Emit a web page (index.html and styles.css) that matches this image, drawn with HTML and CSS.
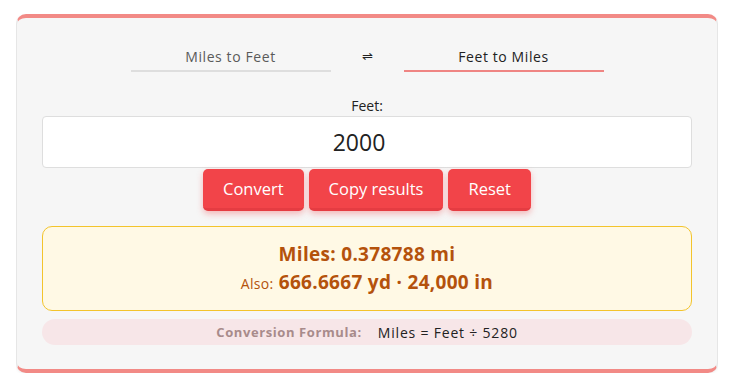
FILE: index.html
```html
<!DOCTYPE html>
<html lang="en">
<head>
    <meta charset="UTF-8">
    <meta name="viewport" content="width=device-width, initial-scale=1.0">
    <title>Feet to Miles Converter</title>
    <link rel="stylesheet" href="styles.css">
</head>
<body>
    <div class="card">
        <div class="tabs">
            <div class="tab">Miles to Feet</div>
            <div class="swap">&#8652;</div>
            <div class="tab active">Feet to Miles</div>
        </div>
        <label class="field-label" for="feetInput">Feet:</label>
        <input type="text" id="feetInput" class="value-input" value="2000">
        <div class="buttons">
            <button class="btn">Convert</button>
            <button class="btn">Copy results</button>
            <button class="btn">Reset</button>
        </div>
        <div class="result">
            <div class="main-line">Miles: 0.378788 mi</div>
            <div class="also-line"><span class="also">Also:</span> 666.6667 yd · 24,000 in</div>
        </div>
        <div class="formula">
            <span class="formula-label">Conversion Formula:</span>
            <span class="formula-text">Miles = Feet ÷ 5280</span>
        </div>
    </div>
</body>
</html>
```

FILE: styles.css
```css
body {
    margin: 14px 19px 0 16px;
    font-family: 'Open Sans', 'Noto Sans', sans-serif;
    background-color: #fff;
}
.card {
    background-color: #f6f6f6;
    border: 1px solid #e6e6e6;
    border-top: 4px solid #f28a86;
    border-bottom: 4px solid #f28a86;
    border-radius: 10px;
    padding: 21px 25px 24px;
    box-shadow: 0 1px 3px rgba(0, 0, 0, 0.08);
}
.tabs {
    display: flex;
    justify-content: center;
    align-items: center;
}
.tab {
    width: 200px;
    text-align: center;
    font-size: 14px;
    color: #5a5a5a;
    padding: 8px 0 4px;
    border-bottom: 2px solid #dedede;
    letter-spacing: 0.6px;
}
.tab.active {
    color: #222;
    border-bottom-color: #ef8583;
}
.swap {
    width: 73px;
    text-align: center;
    font-size: 13px;
    color: #222;
}
.field-label {
    display: block;
    text-align: center;
    font-size: 14px;
    color: #222;
    margin-top: 24px;
    line-height: 20px;
}
.value-input {
    display: block;
    box-sizing: border-box;
    width: 100%;
    height: 52px;
    margin-top: 0;
    padding: 0 18px 0 2px;
    border: 1px solid #dedede;
    border-radius: 4px;
    background: #fff;
    text-align: center;
    font-family: inherit;
    font-size: 23px;
    color: #222;
    outline: none;
}
.buttons {
    display: flex;
    justify-content: center;
    gap: 5px;
    margin-top: 1px;
}
.btn {
    height: 42px;
    padding: 0 20px;
    background-color: #f24449;
    color: #fff;
    font-family: inherit;
    font-size: 16.5px;
    border: none;
    border-bottom: 3px solid #e53c42;
    border-radius: 5px;
    box-shadow: 0 3px 6px rgba(240, 68, 72, 0.35);
    cursor: pointer;
}
.result {
    margin-top: 15px;
    background-color: #fff9e5;
    border: 1px solid #f3c42c;
    border-radius: 10px;
    padding: 13px 0 12px;
    text-align: center;
    color: #b4520c;
    font-weight: 700;
    font-size: 19px;
    line-height: 28px;
    letter-spacing: 0.3px;
}
.also {
    font-size: 14px;
    font-weight: 400;
}
.formula {
    margin-top: 8px;
    height: 26px;
    background-color: #f7e6e8;
    border-radius: 13px;
    display: flex;
    justify-content: center;
    align-items: center;
    gap: 16px;
}
.formula-label {
    font-size: 13px;
    font-weight: 700;
    color: #a88b8b;
    letter-spacing: 0.6px;
}
.formula-text {
    font-size: 14px;
    color: #222;
    letter-spacing: 0.8px;
}
```
